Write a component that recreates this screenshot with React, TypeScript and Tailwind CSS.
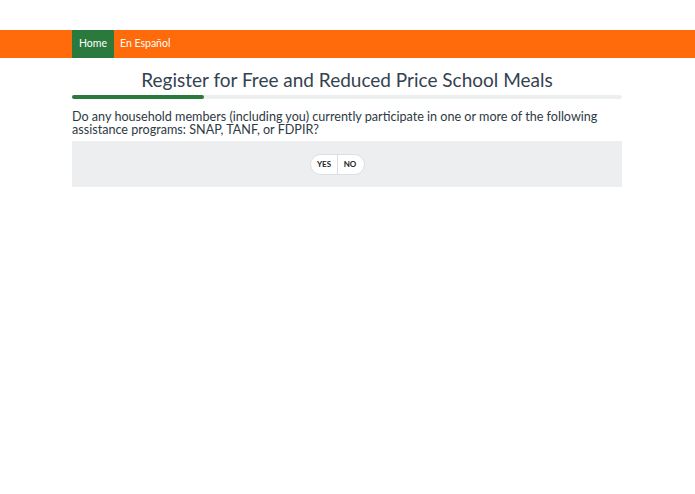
export default function App() {
  return (
    <div className="min-h-screen bg-white font-['Lato','Noto_Sans',sans-serif] text-[#2e3a44]">
      {/* Top navigation */}
      <div className="h-[30px]" />
      <nav className="h-[28px] w-full bg-[#ff6a0a]">
        <div className="mx-[72px] flex h-full text-[10.5px]">
          <a href="#" className="flex h-full items-center bg-[#2a7a3d] px-[7px] text-white">
            Home
          </a>
          <a href="#" className="flex h-full items-center px-[6px] text-white">
            En Español
          </a>
        </div>
      </nav>

      <main className="mx-[72px] w-[550px]">
        <h1 className="mt-[9px] text-center text-[19px] leading-[26px] text-[#34424f]">
          Register for Free and Reduced Price School Meals
        </h1>

        {/* Progress */}
        <div className="mt-[2px] h-[4px] w-full rounded-full bg-[#eceff0]">
          <div className="h-full w-[24%] rounded-full bg-[#2a7a3d]" />
        </div>

        <p className="mt-[11px] text-[12.6px] leading-[13px] text-[#2e3a44]">
          Do any household members (including you) currently participate in one or more of the following
          assistance programs: SNAP, TANF, or FDPIR?
        </p>

        <div className="mt-[5px] flex h-[46px] items-center justify-center bg-[#eceeef] pr-[20px]">
          <div className="flex h-[21px] overflow-hidden rounded-full border border-[#dcdfe1] bg-white text-[8px] font-bold text-[#222]">
            <button className="w-[27px] border-r border-[#dcdfe1] pl-[1px]">YES</button>
            <button className="w-[26px] pr-[1px]">NO</button>
          </div>
        </div>
      </main>
    </div>
  );
}
